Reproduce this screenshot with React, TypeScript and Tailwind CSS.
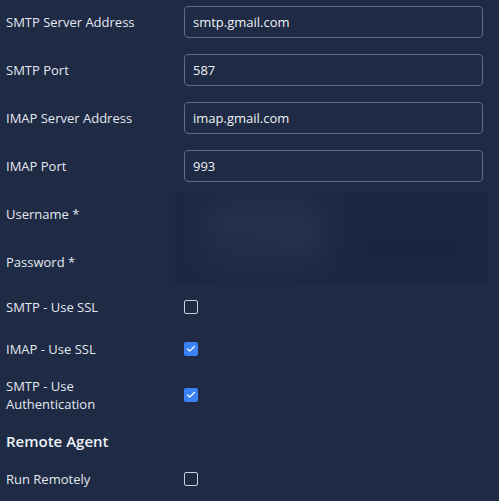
import { Check } from 'lucide-react'

const font = { fontFamily: '"Source Sans Pro", "Open Sans", sans-serif' }

function TextRow({ label, value }: { label: string; value?: string }) {
  return (
    <div className="flex h-[32px] items-center">
      <div className="w-[184px] pt-[1px] pl-[6px] text-[13px] text-[#e4e8f0]">{label}</div>
      <div className="flex h-[32px] w-[299px] items-center rounded-[4px] border border-[#5d6d92] bg-[#1f2a44] px-[8px] pt-[1px] text-[13px] text-[#eef1f6]">
        {value}
      </div>
    </div>
  )
}

function CheckRow({ label, checked, className }: { label: string; checked?: boolean; className?: string }) {
  return (
    <div className={`flex items-center ${className ?? ''}`}>
      <div className="w-[184px] pr-[36px] pl-[6px] text-[13px] leading-[18px] text-[#e4e8f0]">{label}</div>
      {checked ? (
        <div className="flex h-[14px] w-[14px] items-center justify-center rounded-[2px] bg-[#3b82f6]">
          <Check size={10} strokeWidth={3} className="text-white" />
        </div>
      ) : (
        <div className="h-[14px] w-[14px] rounded-[2px] border border-[#c9cfdb]" />
      )}
    </div>
  )
}

export default function App() {
  return (
    <div className="h-[501px] w-[499px] overflow-hidden bg-[#1f2a44]" style={font}>
      <div className="relative flex flex-col gap-[16px] pt-[6px]">
        <TextRow label="SMTP Server Address" value="smtp.gmail.com" />
        <TextRow label="SMTP Port" value="587" />
        <TextRow label="IMAP Server Address" value="imap.gmail.com" />
        <TextRow label="IMAP Port" value="993" />
        <TextRow label="Username *" />
        <TextRow label="Password *" />
        <div className="absolute top-[193px] left-[175px] h-[90px] w-[312px] overflow-hidden bg-[#1d2742]">
          <div className="absolute inset-0 blur-lg">
            <div className="absolute top-[8px] left-[30px] h-[60px] w-[120px] bg-[#26324e]" />
            <div className="absolute top-[30px] left-[170px] h-[50px] w-[130px] bg-[#1b2440]" />
            <div className="absolute top-[45px] left-[40px] h-[40px] w-[60px] bg-[#212c48]" />
          </div>
        </div>
      </div>
      <CheckRow label="SMTP - Use SSL" className="mt-[13px] h-[32px]" />
      <CheckRow label="IMAP - Use SSL" checked className="mt-[10px] h-[32px]" />
      <CheckRow label="SMTP - Use Authentication" checked className="mt-[12px] h-[36px]" />
      <div className="mt-[16px] flex h-[24px] items-center pl-[6px] text-[15px] font-semibold text-[#eef1f6]">
        Remote Agent
      </div>
      <CheckRow label="Run Remotely" className="mt-[10px] h-[32px]" />
    </div>
  )
}
